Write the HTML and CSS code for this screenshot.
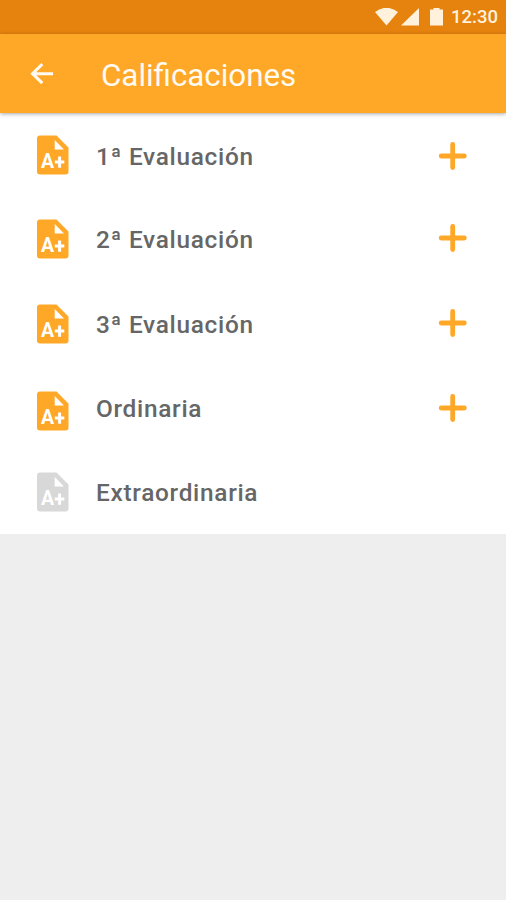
FILE: index.html
```html
<!DOCTYPE html>
<html lang="es">
<head>
<meta charset="UTF-8">
<meta name="viewport" content="width=device-width, initial-scale=1.0">
<title>Calificaciones</title>
<link rel="stylesheet" href="styles.css">
</head>
<body>

<!-- Icons used in the list -->
<svg class="sprite" width="0" height="0">
    <symbol id="page" viewBox="0 0 33 40">
        <path fill="currentColor" d="M4 .5H20.500L32.500 12.500V36.500a3 3 0 0 1-3 3H4a3 3 0 0 1-3-3V3.500a3 3 0 0 1 3-3z"/>
        <path fill="#fff" d="M18.700 5v9.500H28z"/>
        <path stroke="#fff" stroke-width="3" d="M18.800 27H28.300M23.600 21.500V32.700"/>
    </symbol>
    <symbol id="plus" viewBox="0 0 30 30">
        <path stroke="currentColor" stroke-width="4.800" stroke-linecap="round" d="M3.200 15H26.300M14.700 3.400V26.600"/>
    </symbol>
</svg>

<div class="status-bar">
    <svg class="wifi" width="23" height="18" viewBox="0 0 23 18">
        <path fill="currentColor" d="M0 4Q11.500-4.500 23 4L11.500 17.500z"/>
    </svg>
    <svg class="signal" width="18" height="18" viewBox="0 0 18 18">
        <path fill="currentColor" d="M0 17.500L18 0V17.500z"/>
    </svg>
    <svg class="battery" width="13" height="18" viewBox="0 0 13 18">
        <path fill="currentColor" d="M0 1.500H3.500V0H9.500V1.500H13V17.500H0z"/>
    </svg>
    <span class="clock">12:30</span>
</div>

<header class="app-bar">
    <svg class="back" width="24" height="22" viewBox="0 0 24 22">
        <path fill="none" stroke="currentColor" stroke-width="3" d="M23 10.700H2.500M12.300 1.200L2.500 10.700l9.800 9.500"/>
    </svg>
    <h1 class="title">Calificaciones</h1>
</header>

<ul class="list">
    <li class="row first">
        <svg class="grade" viewBox="0 0 33 40"><use href="#page"/><text x="5" y="33">A</text></svg>
        <span class="label">1ª Evaluación</span>
        <svg class="plus"><use href="#plus"/></svg>
    </li>
    <li class="row second">
        <svg class="grade" viewBox="0 0 33 40"><use href="#page"/><text x="5" y="33">A</text></svg>
        <span class="label">2ª Evaluación</span>
        <svg class="plus"><use href="#plus"/></svg>
    </li>
    <li class="row third">
        <svg class="grade" viewBox="0 0 33 40"><use href="#page"/><text x="5" y="33">A</text></svg>
        <span class="label">3ª Evaluación</span>
        <svg class="plus"><use href="#plus"/></svg>
    </li>
    <li class="row final">
        <svg class="grade" viewBox="0 0 33 40"><use href="#page"/><text x="5" y="33">A</text></svg>
        <span class="label">Ordinaria</span>
        <svg class="plus"><use href="#plus"/></svg>
    </li>
    <li class="row disabled">
        <svg class="grade" viewBox="0 0 33 40"><use href="#page"/><text x="5" y="33">A</text></svg>
        <span class="label">Extraordinaria</span>
    </li>
</ul>

</body>
</html>
```
FILE: styles.css
```css
* {
    box-sizing: border-box;
}
body {
    margin: 0;
    min-height: 900px;
    background-color: #eee;
    font-family: Roboto, "Liberation Sans", sans-serif;
}
.sprite {
    display: block;
}
.status-bar {
    display: flex;
    justify-content: flex-end;
    height: 34px;
    padding: 8px 8px 0 0;
    background-color: #e5830e;
    color: #fff1dc;
}
.signal {
    margin-left: 3px;
}
.battery {
    margin-left: 10.5px;
}
.clock {
    margin-left: 8.5px;
    font-size: 18.5px;
    font-weight: 500;
    line-height: 18px;
}
.app-bar {
    position: relative;
    display: flex;
    height: 79px;
    padding-left: 30px;
    background-color: #ffa726;
    color: #fffbf2;
    box-shadow: 0 1px 4px rgba(0, 0, 0, 0.35);
}
.back {
    margin-top: 29px;
}
.title {
    margin: 23px 0 0 47px;
    font-size: 31.3px;
    font-weight: 400;
    line-height: 37px;
}
.list {
    height: 421px;
    margin: 0;
    padding: 2px 0 0;
    background-color: #fff;
    list-style: none;
}
.row {
    display: flex;
    height: 84px;
    padding: 0 38px 0 36px;
    color: #ffa726;
}
.grade {
    width: 33px;
    height: 40px;
    margin-top: 21px;
}
.grade text {
    fill: #fff;
    font-size: 19.5px;
    font-weight: 700;
}
.label {
    flex: 1;
    margin-left: 27px;
    color: #666;
    font-size: 24.4px;
    font-weight: 500;
    line-height: 84px;
    letter-spacing: 0.7px;
}
.plus {
    width: 30px;
    height: 30px;
    margin-top: 26px;
}
/* Rows are not spaced evenly */
.first {
    height: 83px;
}
.first .grade {
    margin-top: 20px;
}
.second {
    height: 85px;
}
.second .plus {
    margin-top: 25px;
}
.third .plus {
    margin-top: 24.5px;
}
.final .grade {
    margin-top: 24px;
}
.disabled {
    height: 83px;
    color: #d8d8d8;
}
```
